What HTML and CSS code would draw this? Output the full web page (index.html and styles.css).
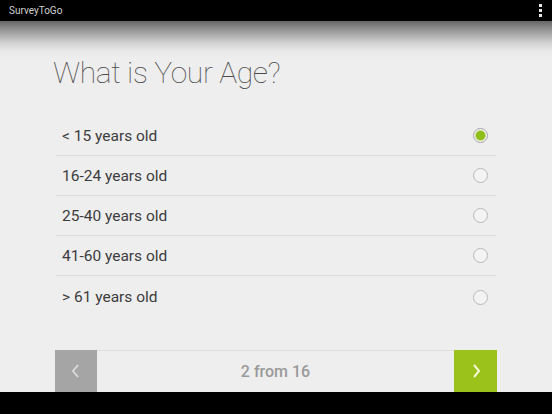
FILE: index.html
```html
<!DOCTYPE html>
<html>
<head>
<meta charset="utf-8">
<link rel="stylesheet" href="styles.css">
</head>
<body>
<header class="appbar">
  <span class="appname">SurveyToGo</span>
  <span class="menu"><i></i><i></i><i></i></span>
</header>
<main class="content">
  <h1 class="question">What is Your Age?</h1>
  <ul class="options">
    <li class="option"><span>&lt; 15 years old</span><span class="radio checked"></span></li>
    <li class="option"><span>16-24 years old</span><span class="radio"></span></li>
    <li class="option"><span>25-40 years old</span><span class="radio"></span></li>
    <li class="option"><span>41-60 years old</span><span class="radio"></span></li>
    <li class="option last"><span>&gt; 61 years old</span><span class="radio"></span></li>
  </ul>
  <nav class="pager">
    <button class="btn prev"><svg width="12" height="16" viewBox="0 0 12 16"><polyline points="8,2 3,8 8,14" fill="none" stroke="#dcdcdc" stroke-width="1.8"/></svg></button>
    <div class="count">2 from 16</div>
    <button class="btn next"><svg width="12" height="16" viewBox="0 0 12 16"><polyline points="4,2 9,8 4,14" fill="none" stroke="#f4f8d8" stroke-width="2"/></svg></button>
  </nav>
</main>
<footer class="sysbar"></footer>
</body>
</html>
```
FILE: styles.css
```css
html, body {
  margin: 0;
  padding: 0;
}
body {
  width: 552px;
  height: 414px;
  overflow: hidden;
  display: flex;
  flex-direction: column;
  background: #eeeeee;
  font-family: Roboto, "Liberation Sans", sans-serif;
}
.appbar {
  height: 21px;
  flex: none;
  background: #000;
  display: flex;
  align-items: center;
  justify-content: space-between;
  padding: 0 10px 0 9px;
}
.appname {
  color: #cfcfcf;
  font-size: 10px;
}
.menu {
  display: flex;
  flex-direction: column;
  gap: 2px;
}
.menu i {
  display: block;
  width: 3px;
  height: 3px;
  background: #e6e6e6;
}
.content {
  flex: 1;
  min-height: 0;
  background: linear-gradient(#666666 0, #9a9a9a 10px, #d2d2d2 22px, #e9e9e9 30px, #eeeeee 38px) top / 100% 40px no-repeat, #eeeeee;
  padding: 34px 55px 0 55px;
  display: flex;
  flex-direction: column;
}
.question {
  margin: 0 0 0 -2px;
  font-weight: 100;
  font-size: 30px;
  line-height: 36px;
  letter-spacing: -0.4px;
  color: #4a4a4a;
}
.options {
  list-style: none;
  margin: 25px 1px 0 1px;
  padding: 0;
}
.option {
  height: 39px;
  border-bottom: 1px solid #dcdcdc;
  display: flex;
  align-items: center;
  justify-content: space-between;
  padding: 0 8px 0 6px;
  font-size: 15.5px;
  color: #3c3c3c;
}
.option.last {
  border-bottom: none;
  height: 42px;
}
.radio {
  box-sizing: border-box;
  width: 15px;
  height: 15px;
  border-radius: 50%;
  border: 1px solid #b9b9b9;
  background: #f3f3f3;
}
.radio.checked {
  border-color: #a5a5a5;
  background: radial-gradient(circle, #8fbe1a 0, #8fbe1a 4.2px, #c9dd8e 5px, #f3f3f3 5.8px);
}
.pager {
  margin-top: 32px;
  height: 42px;
  display: flex;
  border-top: 1px solid #dedede;
  box-sizing: border-box;
}
.btn {
  width: 42px;
  margin: -1px 0 0 0;
  height: 42px;
  border: none;
  padding: 0;
  display: flex;
  align-items: center;
  justify-content: center;
}
.btn.prev {
  background: #a5a5a5;
}
.btn.next {
  width: 43px;
  background: #9bc21a;
}
.count {
  flex: 1;
  display: flex;
  align-items: center;
  justify-content: center;
  font-size: 16px;
  font-weight: 500;
  color: #9a9a9a;
}
.sysbar {
  height: 22px;
  flex: none;
  background: #000;
}
```
